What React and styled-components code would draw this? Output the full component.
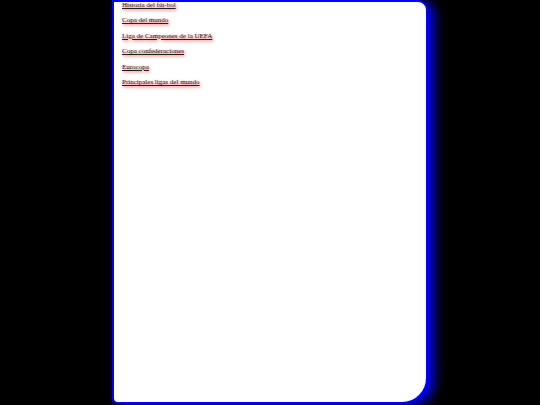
import React from 'react'
import styled, { createGlobalStyle } from 'styled-components'

const GlobalStyle = createGlobalStyle`
  html, body {
    margin: 0;
    padding: 0;
    background: #000;
    overflow: hidden;
  }
`

export const Page = styled.div`
  width: 540px;
  height: 405px;
  background: #000;
`

export const Panel = styled.nav`
  box-sizing: border-box;
  margin-left: 112px;
  width: 316px;
  height: 404px;
  background: #fff;
  border: 2px solid #0000ff;
  border-radius: 0 10px 26px 6px;
  box-shadow: 6px 3px 12px #0000ff;
  padding: 0 0 0 8px;
`

export const LinkList = styled.ul`
  list-style: none;
  margin: -4px 0 0;
  padding: 0;
`

export const Item = styled.li`
  font-family: 'Liberation Serif', 'Times New Roman', serif;
  font-size: 7px;
  line-height: 15.4px;
`

export const Link = styled.a`
  color: #222;
  text-decoration: underline;
  text-shadow: 1px 1px 3px #ff2a2a;
`

const links = [
  'Historia del fút-bol',
  'Copa del mundo',
  'Liga de Campeones de la UEFA',
  'Copa confederaciones',
  'Eurocopa',
  'Principales ligas del mundo',
]

export default function App() {
  return (
    <Page>
      <GlobalStyle />
      <Panel>
        <LinkList>
          {links.map((label) => (
            <Item key={label}>
              <Link href="#">{label}</Link>
            </Item>
          ))}
        </LinkList>
      </Panel>
    </Page>
  )
}
